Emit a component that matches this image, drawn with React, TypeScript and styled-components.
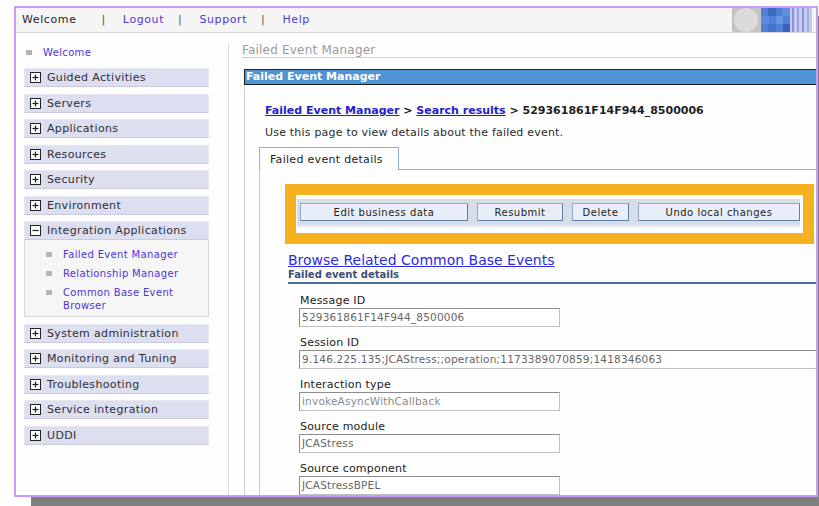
import React from 'react'
import styled, { createGlobalStyle } from 'styled-components'

const GlobalStyle = createGlobalStyle`
  html {
    overflow: hidden;
  }
  body {
    margin: 0;
    padding: 0;
    min-height: 100vh;
    background: #ffffff;
    font-family: 'DejaVu Sans', Verdana, sans-serif;
    color: #2b2b2b;
  }
`

const navItems = [
  'Guided Activities',
  'Servers',
  'Applications',
  'Resources',
  'Security',
  'Environment',
]

const navItemsAfter = [
  'System administration',
  'Monitoring and Tuning',
  'Troubleshooting',
  'Service integration',
  'UDDI',
]

const subLinks = ['Failed Event Manager', 'Relationship Manager', 'Common Base Event Browser']

const fields = [
  { label: 'Message ID', value: '529361861F14F944_8500006', wide: false, muted: false },
  {
    label: 'Session ID',
    value: '9.146.225.135;JCAStress;;operation;1173389070859;1418346063',
    wide: true,
    muted: false,
  },
  { label: 'Interaction type', value: 'invokeAsyncWithCallback', wide: false, muted: true },
  { label: 'Source module', value: 'JCAStress', wide: false, muted: false },
  { label: 'Source component', value: 'JCAStressBPEL', wide: false, muted: false },
]

const ToggleBox = ({ open }: { open?: boolean }) => (
  <svg width="11" height="11" viewBox="0 0 11 11">
    <rect x="0.5" y="0.5" width="10" height="10" fill="#ffffff" stroke="#222" />
    <path d="M2.5 5.5h6" stroke="#222" strokeWidth="1.2" />
    {!open && <path d="M5.5 2.5v6" stroke="#222" strokeWidth="1.2" />}
  </svg>
)

const Logo = () => (
  <svg width="80" height="24" viewBox="0 0 80 24">
    <rect x="0" y="0" width="29" height="24" fill="#c4c4c4" />
    <circle cx="14" cy="12" r="12" fill="#dcdbdb" />
    <rect x="29" y="0" width="29" height="24" fill="#4f7fd6" />
    <rect x="36" y="0" width="8" height="8" fill="#3d69c2" />
    <rect x="50" y="0" width="8" height="8" fill="#5e8ee2" />
    <rect x="29" y="8" width="8" height="8" fill="#5c8ae0" />
    <rect x="44" y="8" width="7" height="8" fill="#6a94e4" />
    <rect x="36" y="16" width="8" height="8" fill="#4572cc" />
    <rect x="51" y="16" width="7" height="8" fill="#3a63b8" />
    <rect x="58" y="0" width="22" height="24" fill="#c6caee" />
    <rect x="60" y="0" width="2" height="24" fill="#8a96dc" />
    <rect x="65" y="0" width="2" height="24" fill="#9aa4e0" />
    <rect x="70" y="0" width="2" height="24" fill="#8a96dc" />
    <rect x="75" y="0" width="2" height="24" fill="#a6aee4" />
  </svg>
)

export default function App() {
  return (
    <>
      <GlobalStyle />
      <Frame>
        <TopBar>
          <TopLinks>
            <TopText>Welcome</TopText>
            <Pipe>|</Pipe>
            <TopLink>Logout</TopLink>
            <Pipe>|</Pipe>
            <TopLink>Support</TopLink>
            <Pipe>|</Pipe>
            <TopLink>Help</TopLink>
          </TopLinks>
          <Logo />
        </TopBar>

        <Body>
          <Nav>
            <WelcomeRow>
              <Bullet />
              <SubLink>Welcome</SubLink>
            </WelcomeRow>
            <NavList>
              {navItems.map((item) => (
                <NavItem key={item}>
                  <ToggleBox />
                  <span>{item}</span>
                </NavItem>
              ))}
              <div>
                <NavItem>
                  <ToggleBox open />
                  <span>Integration Applications</span>
                </NavItem>
                <SubPanel>
                  {subLinks.map((link) => (
                    <SubRow key={link}>
                      <Bullet />
                      <SubLink>{link}</SubLink>
                    </SubRow>
                  ))}
                </SubPanel>
              </div>
              {navItemsAfter.map((item) => (
                <NavItem key={item}>
                  <ToggleBox />
                  <span>{item}</span>
                </NavItem>
              ))}
            </NavList>
          </Nav>

          <Main>
            <PageTitle>Failed Event Manager</PageTitle>
            <TitleBar>Failed Event Manager</TitleBar>
            <Content>
              <Breadcrumb>
                <CrumbLink>Failed Event Manager</CrumbLink> &gt;{' '}
                <CrumbLink>Search results</CrumbLink> &gt; 529361861F14F944_8500006
              </Breadcrumb>
              <Intro>Use this page to view details about the failed event.</Intro>

              <TabStrip>
                <Tab>Failed event details</Tab>
              </TabStrip>
              <TabPanel>
                <Highlight>
                  <HighlightInner>
                    <Toolbar>
                      <ActionButton $width={168}>Edit business data</ActionButton>
                      <ActionButton $width={86}>Resubmit</ActionButton>
                      <ActionButton $width={57}>Delete</ActionButton>
                      <ActionButton $width={162}>Undo local changes</ActionButton>
                    </Toolbar>
                  </HighlightInner>
                </Highlight>

                <BrowseLink>Browse Related Common Base Events</BrowseLink>
                <SectionTitle>Failed event details</SectionTitle>

                <FieldList>
                  {fields.map((f) => (
                    <Field key={f.label}>
                      <FieldLabel>{f.label}</FieldLabel>
                      <FieldInput $wide={f.wide} $muted={f.muted}>
                        {f.value}
                      </FieldInput>
                    </Field>
                  ))}
                </FieldList>
              </TabPanel>
            </Content>
          </Main>
        </Body>
      </Frame>
    </>
  )
}

const Frame = styled.div`
  margin: 6px 0 0 14px;
  width: 800px;
  height: 487px;
  border: 2px solid #c99cf5;
  box-shadow: 17px 10px 0 #7f7f7f;
  background: #fefefe;
  overflow: hidden;
  display: flex;
  flex-direction: column;
`

const TopBar = styled.header`
  height: 24px;
  flex: none;
  display: flex;
  justify-content: space-between;
  align-items: center;
  background: #f5f5f5;
  border-bottom: 1px solid #d2d2d2;
  padding-left: 6px;
  overflow: hidden;
  svg {
    margin-right: 4px;
  }
`

const TopLinks = styled.div`
  display: flex;
  align-items: center;
  font-size: 11px;
  line-height: 14px;
  letter-spacing: 0.6px;
`

const TopText = styled.span`
  color: #262626;
  margin-right: 11px;
`

const TopLink = styled.span`
  color: #4c35d8;
`

const Pipe = styled.span`
  color: #555;
  margin: 0 17px 0 14px;
`

const Body = styled.div`
  flex: 1;
  display: grid;
  grid-template-columns: 212px 1fr;
  min-height: 0;
`

const Nav = styled.nav`
  padding: 12px 0 0 8px;
`

const WelcomeRow = styled.div`
  display: flex;
  align-items: center;
  height: 14px;
  padding-left: 2px;
  margin-bottom: 9px;
`

const Bullet = styled.span`
  width: 6px;
  height: 5px;
  background: #b5b5b5;
  margin-right: 11px;
  flex: none;
`

const SubLink = styled.span`
  color: #4c35d8;
  font-size: 10px;
  letter-spacing: 0.35px;
  line-height: 13px;
`

const NavList = styled.div`
  display: flex;
  flex-direction: column;
  gap: 6.5px;
  width: 185px;
`

const NavItem = styled.div`
  height: 19px;
  box-sizing: border-box;
  display: flex;
  align-items: center;
  gap: 6px;
  padding-left: 5px;
  background: #dcdff0;
  border: 1px solid #e6e7f0;
  border-bottom-color: #c9cbd8;
  font-size: 11px;
  letter-spacing: 0.35px;
  color: #2f2f36;
`

const SubPanel = styled.div`
  height: 77px;
  box-sizing: border-box;
  background: #f6f6f6;
  border: 1px solid #d6d6da;
  border-top: none;
  padding: 8px 0 0 21px;
  display: flex;
  flex-direction: column;
  gap: 6px;
`

const SubRow = styled.div`
  display: flex;
  align-items: flex-start;
  ${Bullet} {
    margin-top: 4px;
  }
`

const Main = styled.main`
  margin-top: 10px;
  border-left: 1px solid #dedede;
  min-width: 0;
`

const PageTitle = styled.div`
  margin-left: 13px;
  font-size: 12px;
  line-height: 14px;
  color: #9a9a9a;
  letter-spacing: 0.2px;
  border-bottom: 1px solid #cfcfcf;
`

const TitleBar = styled.div`
  margin: 11px 0 0 15px;
  width: 620px;
  height: 16px;
  box-sizing: border-box;
  background: #5194d5;
  border: 1px solid #1e1e1e;
  border-right: none;
  color: #ffffff;
  font-size: 11px;
  font-weight: bold;
  line-height: 14px;
  padding-left: 1px;
`

const Content = styled.div`
  margin-left: 15px;
  border-left: 1px solid #cfcfcf;
  padding: 19px 0 0 14px;
  width: 640px;
`

const Breadcrumb = styled.div`
  margin-left: 6px;
  font-size: 11px;
  font-weight: bold;
  line-height: 14px;
  color: #1e1e1e;
`

const CrumbLink = styled.span`
  color: #2222cc;
  text-decoration: underline;
`

const Intro = styled.div`
  margin: 8px 0 0 6px;
  font-size: 11px;
  line-height: 14px;
  letter-spacing: 0.2px;
  color: #2b2b2b;
`

const TabStrip = styled.div`
  margin-top: 7px;
  display: flex;
  border-bottom: 1px solid #8eb0de;
`

const Tab = styled.div`
  height: 23px;
  width: 140px;
  box-sizing: border-box;
  border: 1px solid #8eb0de;
  border-bottom: none;
  background: #ffffff;
  margin-bottom: -1px;
  padding: 5px 0 0 10px;
  font-size: 11px;
  letter-spacing: 0.3px;
  color: #222;
`

const TabPanel = styled.div`
  border-left: 1px solid #b8cbe6;
  padding: 14px 0 0 25px;
`

const Highlight = styled.div`
  width: 529px;
  box-sizing: border-box;
  border: 11px solid #f5b120;
  background: #ffffff;
  padding: 4px 3px 6px 1px;
`

const HighlightInner = styled.div`
  overflow: hidden;
`

const Toolbar = styled.div`
  height: 28px;
  box-sizing: border-box;
  background: #d6dce8;
  border-bottom: 2px solid #e4e9f1;
  display: flex;
  align-items: center;
  gap: 9px;
  padding: 0 0 0 3px;
`

const ActionButton = styled.button<{ $width: number }>`
  flex: none;
  width: ${(p) => p.$width}px;
  height: 18px;
  box-sizing: border-box;
  background: #e8eff9;
  border: 1px solid #8fa9cc;
  border-right-color: #5d7ca6;
  border-bottom-color: #5d7ca6;
  font-family: 'DejaVu Sans', Verdana, sans-serif;
  font-size: 10px;
  letter-spacing: 0.5px;
  color: #222;
  padding: 0;
`

const BrowseLink = styled.div`
  margin: 8px 0 0 3px;
  font-size: 14px;
  line-height: 17px;
  color: #2b2be0;
  text-decoration: underline;
`

const SectionTitle = styled.div`
  margin-left: 3px;
  font-size: 10px;
  font-weight: bold;
  line-height: 12px;
  color: #3c4f74;
  border-bottom: 2px solid #4b6d9d;
  padding-bottom: 1px;
`

const FieldList = styled.div`
  display: flex;
  flex-direction: column;
  gap: 9px;
  padding: 10px 0 0 14px;
`

const Field = styled.div`
  display: flex;
  flex-direction: column;
`

const FieldLabel = styled.div`
  font-size: 11px;
  line-height: 14px;
  letter-spacing: 0.2px;
  color: #222;
  margin-left: 1px;
`

const FieldInput = styled.div<{ $wide: boolean; $muted: boolean }>`
  width: ${(p) => (p.$wide ? '560px' : '261px')};
  height: 19px;
  box-sizing: border-box;
  border: 1px solid #8c8c8c;
  border-right-color: #c0c0c0;
  border-bottom-color: #c0c0c0;
  background: #ffffff;
  padding: 2px 0 0 2px;
  font-size: 10.5px;
  line-height: 13px;
  letter-spacing: 0.2px;
  color: ${(p) => (p.$muted ? '#8a8a8a' : '#666666')};
  white-space: nowrap;
  overflow: hidden;
`
